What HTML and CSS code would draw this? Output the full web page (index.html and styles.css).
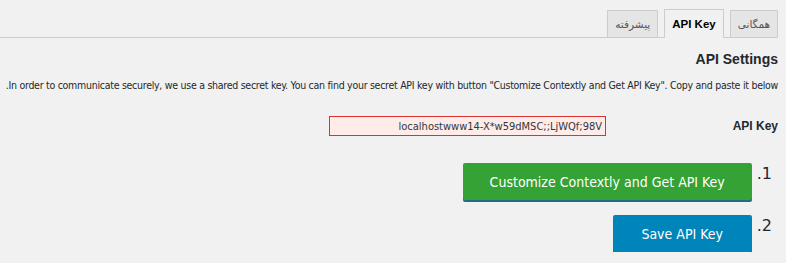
FILE: index.html
```html
<!DOCTYPE html>
<html lang="fa" dir="rtl">
<head>
    <meta charset="UTF-8">
    <title>Contextly Settings</title>
    <link rel="stylesheet" href="styles.css">
</head>
<body>
    <div class="wrap">
        <h2 class="nav-tab-wrapper">
            <a class="nav-tab">همگانی</a>
            <a class="nav-tab nav-tab-active">API Key</a>
            <a class="nav-tab">پیشرفته</a>
        </h2>

        <h3 class="section-title">API Settings</h3>
        <p class="section-desc">In order to communicate securely, we use a shared secret key. You can find your secret API key with button "Customize Contextly and Get API Key". Copy and paste it below.</p>

        <div class="form-row">
            <label class="form-label" for="api-key">API Key</label>
            <input type="text" id="api-key" class="api-input" value="localhostwww14-X*w59dMSC;;LjWQf;98V">
        </div>

        <div class="step">
            <span class="step-num">1.</span>
            <button class="button button-green">Customize Contextly and Get API Key</button>
        </div>
        <div class="step">
            <span class="step-num">2.</span>
            <button class="button button-blue">Save API Key</button>
        </div>
    </div>
</body>
</html>
```

FILE: styles.css
```css
body {
    margin: 0;
    background: #f1f1f1;
    color: #23282d;
    font-family: 'DejaVu Sans', sans-serif;
    font-size: 13px;
}
.wrap {
    padding: 9px 8px 0 0;
}
.nav-tab-wrapper {
    display: flex;
    margin: 0;
    padding: 0;
    border-bottom: 1px solid #ccc;
    height: 28px;
}
.nav-tab {
    display: block;
    height: 26px;
    line-height: 26px;
    margin-left: 6px;
    padding: 0 7px;
    border: 1px solid #ccc;
    border-bottom: none;
    background: #e5e5e5;
    color: #555;
    font-size: 10.5px;
    font-weight: normal;
    margin-top: 1px;
}
.nav-tab-active {
    background: #f1f1f1;
    color: #000;
    font-family: 'Liberation Sans', sans-serif;
    font-weight: bold;
    font-size: 11.5px;
    height: 28px;
    line-height: 28px;
    margin-top: 0;
    margin-bottom: -1px;
    padding: 0 7px;
}
.section-title {
    margin: 13px 0 0;
    font-family: 'Liberation Sans', sans-serif;
    font-size: 14px;
    font-weight: bold;
    color: #23282d;
}
.section-desc {
    margin: 12px 0 0;
    font-family: 'DejaVu Sans Condensed', sans-serif;
    font-size: 10.5px;
    letter-spacing: -0.27px;
    white-space: nowrap;
}
.form-row {
    display: flex;
    align-items: center;
    margin-top: 25px;
}
.form-label {
    width: 172px;
    font-family: 'Liberation Sans', sans-serif;
    font-weight: bold;
    font-size: 12px;
}
.api-input {
    width: 277px;
    height: 20px;
    box-sizing: border-box;
    padding: 0 3px;
    border: 1px solid #dc3232;
    background: #ffebe8;
    color: #32373c;
    font-family: 'DejaVu Sans Condensed', sans-serif;
    font-size: 11px;
    text-align: right;
    direction: ltr;
}
.step {
    display: flex;
    align-items: flex-start;
    margin-top: 27px;
}
.step + .step {
    margin-top: 15px;
}
.step-num {
    padding-right: 6px;
    margin-left: 5px;
    font-size: 16px;
    line-height: 22px;
    color: #23282d;
}
.button {
    height: 37px;
    border: none;
    border-radius: 2px;
    color: #fff;
    font-family: 'DejaVu Sans Condensed', sans-serif;
    font-size: 14px;
    cursor: pointer;
}
.button-green {
    width: 289px;
    background: #34a234;
    box-shadow: 0 2px 0 #236c86;
}
.button-blue {
    width: 139px;
    background: #0085ba;
    box-shadow: 0 2px 0 #006799;
}
```
